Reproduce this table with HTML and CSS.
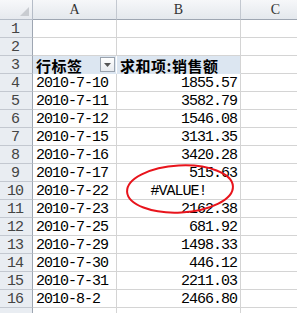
FILE: index.html
```html
<!DOCTYPE html>
<html>
<head>
<meta charset="utf-8">
<link rel="stylesheet" href="styles.css">
</head>
<body>
<div class="sheet">
  <div class="grid">
    <div class="corner"><span class="tri"></span></div>
    <div class="colhead">A</div>
    <div class="colhead">B</div>
    <div class="colhead last">C</div>

    <div class="rowhead">1</div><div class="cell"></div><div class="cell"></div><div class="cell"></div>
    <div class="rowhead">2</div><div class="cell"></div><div class="cell"></div><div class="cell"></div>
    <div class="rowhead">3</div>
    <div class="cell pivot label first">行标签<span class="filter"><svg width="7" height="4" viewBox="0 0 7 4"><path d="M0 0H7L3.5 4Z" fill="#555"/></svg></span></div>
    <div class="cell pivot label">求和项:销售额</div>
    <div class="cell"></div>

    <div class="rowhead">4</div><div class="cell txt">2010-7-10</div><div class="cell num">1855.57</div><div class="cell"></div>
    <div class="rowhead">5</div><div class="cell txt">2010-7-11</div><div class="cell num">3582.79</div><div class="cell"></div>
    <div class="rowhead">6</div><div class="cell txt">2010-7-12</div><div class="cell num">1546.08</div><div class="cell"></div>
    <div class="rowhead">7</div><div class="cell txt">2010-7-15</div><div class="cell num">3131.35</div><div class="cell"></div>
    <div class="rowhead">8</div><div class="cell txt">2010-7-16</div><div class="cell num">3420.28</div><div class="cell"></div>
    <div class="rowhead">9</div><div class="cell txt">2010-7-17</div><div class="cell num">515.63</div><div class="cell"></div>
    <div class="rowhead">10</div><div class="cell txt">2010-7-22</div><div class="cell err">#VALUE!</div><div class="cell"></div>
    <div class="rowhead">11</div><div class="cell txt">2010-7-23</div><div class="cell num">2162.38</div><div class="cell"></div>
    <div class="rowhead">12</div><div class="cell txt">2010-7-25</div><div class="cell num">681.92</div><div class="cell"></div>
    <div class="rowhead">13</div><div class="cell txt">2010-7-29</div><div class="cell num">1498.33</div><div class="cell"></div>
    <div class="rowhead">14</div><div class="cell txt">2010-7-30</div><div class="cell num">446.12</div><div class="cell"></div>
    <div class="rowhead">15</div><div class="cell txt">2010-7-31</div><div class="cell num">2211.03</div><div class="cell"></div>
    <div class="rowhead">16</div><div class="cell txt">2010-8-2</div><div class="cell num">2466.80</div><div class="cell"></div>
    <div class="rowhead"></div><div class="cell"></div><div class="cell"></div><div class="cell"></div>
  </div>
  <svg class="circle" width="297" height="313" viewBox="0 0 297 313">
    <ellipse cx="180" cy="189" rx="53" ry="23.5" fill="none" stroke="#e8141c" stroke-width="2" transform="rotate(-3 180 189)"/>
  </svg>
</div>
</body>
</html>
```

FILE: styles.css
```css
html, body {
  margin: 0;
  padding: 0;
  background: #ffffff;
  overflow: hidden;
}
.sheet {
  position: relative;
  width: 297px;
  height: 313px;
  overflow: hidden;
}
.grid {
  display: grid;
  grid-template-columns: 33px 84px 124px 70px;
  grid-template-rows: 20px repeat(17, 18px);
  font-family: "Liberation Mono", "DejaVu Sans Mono", monospace;
  font-size: 15px;
  letter-spacing: -1px;
  color: #000;
}
.corner {
  background: linear-gradient(#f7f8fa, #e6e9ee);
  border-right: 1px solid #b5bcc7;
  border-bottom: 1px solid #b5bcc7;
  position: relative;
}
.tri {
  position: absolute;
  right: 3px;
  bottom: 3px;
  width: 0;
  height: 0;
  border-left: 9px solid transparent;
  border-bottom: 9px solid #c9ccd1;
}
.colhead {
  background: linear-gradient(#f6f7f9, #e4e8ed);
  border-right: 1px solid #c3c8d0;
  border-bottom: 1px solid #9ea6b2;
  display: flex;
  align-items: center;
  justify-content: center;
  font-family: "Liberation Serif", serif;
  font-size: 14px;
  letter-spacing: 0;
  color: #333;
  padding-top: 1px;
  box-sizing: border-box;
}
.rowhead {
  background: #e9edf2;
  border-right: 1px solid #9ea6b2;
  border-bottom: 1px solid #c3c8d0;
  display: flex;
  align-items: center;
  justify-content: center;
  color: #444;
  font-size: 15px;
  box-sizing: border-box;
  padding-top: 1px;
  padding-right: 2px;
}
.cell {
  border-right: 1px solid #d4d4d4;
  border-bottom: 1px solid #d4d4d4;
  box-sizing: border-box;
  display: flex;
  align-items: center;
  white-space: nowrap;
  overflow: visible;
  line-height: 17px;
  padding-top: 1px;
}
.txt {
  padding-left: 3px;
}
.num {
  justify-content: flex-end;
  padding-right: 3px;
}
.err {
  justify-content: center;
}
.pivot {
  background: #dce6f1;
  border-bottom-color: #dce6f1;
}
.label {
  font-family: "Noto Sans CJK SC", sans-serif;
  font-weight: 700;
  font-size: 15px;
  letter-spacing: 0.5px;
  padding-left: 3px;
  position: relative;
}
.first {
  border-right-color: #ffffff;
}
.filter {
  position: absolute;
  right: 1px;
  top: 1px;
  width: 15px;
  height: 15px;
  box-sizing: border-box;
  border: 1px solid #9aa3ae;
  background: linear-gradient(#ffffff, #e8ebef);
  display: flex;
  align-items: center;
  justify-content: center;
}
.circle {
  position: absolute;
  left: 0;
  top: 0;
  pointer-events: none;
}
```
